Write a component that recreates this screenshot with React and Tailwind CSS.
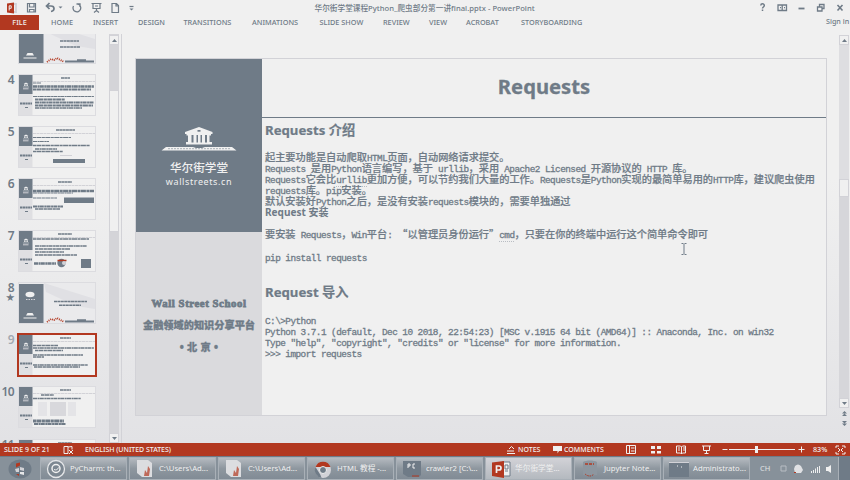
import React from "react";

const SANS = "font-['Noto_Sans','Noto_Sans_CJK_SC',sans-serif]";

/* Splits a line into half-width and full-width runs, so both sit on one grid. */
function Line({ children, wavy }) {
  const runs = children.match(/[\x20-\x7e]+|[^\x20-\x7e]+/g) || [];
  return (
    <div className="h-[11.15px] whitespace-pre leading-[11.15px]">
      {runs.map((run, i) =>
        run.charCodeAt(0) < 127 ? (
          <span key={i} className="font-['Liberation_Mono','Noto_Sans_CJK_SC',monospace] text-[9.4px] tracking-[-0.54px] [-webkit-text-stroke:0.3px_#6f7b87]">
            {run.split(wavy || "\n").map((part, j) => (
              <React.Fragment key={j}>
                {j > 0 && <span className="border-b border-dotted border-[#b9bdc3]">{wavy}</span>}
                {part}
              </React.Fragment>
            ))}
          </span>
        ) : (
          <span key={i} className="font-['Noto_Sans_CJK_SC',sans-serif] text-[10.2px] [-webkit-text-stroke:0.2px_#6f7b87]">{run}</span>
        )
      )}
    </div>
  );
}

function Dome({ x, y, s = 1 }) {
  return (
    <g transform={`translate(${x} ${y}) scale(${s})`} fill="#f0f0f0">
      <path d="M5 0 9 2.5H1zM2 3h1.5v3H2zm2.3 0h1.4v3H4.300zm2.200 0H8v3H6.500zM0 7h10v1H0z" />
    </g>
  );
}

function SlideArt({ title, rows, blocks = [], accents = null }) {
  return (
    <svg viewBox="0 0 78 42" className="block h-[42px] w-[78px]">
      <rect x=".5" y=".5" width="77" height="41" fill="#f0f0f0" stroke="#dcdce0" />
      <rect x="1" y="1" width="13.500" height="19" fill="#6f7b87" />
      <rect x="1" y="20" width="13.500" height="21" fill="#dfdfe2" />
      <Dome x={5} y={8.500} s={0.6} />
      <path d="M5 14.800h5.500" stroke="#d2d2d7" />
      <path d="M2 29.500h12" stroke="#6f7b87" strokeWidth="2.200" strokeDasharray="2.300 .4" />
      <path d="M7 33.500h3" stroke="#6f7b87" />
      <path d="M15 7.500h62" stroke="#d2d2d7" strokeDasharray="3 .5" />
      <path d={`M${title[0]} 4h${title[1]}`} stroke="#6f7b87" strokeWidth="1.700" strokeDasharray="3 .3" />
      {rows.map(([x, y, w, h], i) => (
        <path key={i} d={`M${x} ${y}h${w}`} stroke="#6f7b87" strokeWidth={h} strokeDasharray={i % 2 ? "4 .5 2 .3" : "3 .4 5 .5"} />
      ))}
      {blocks.map(([x, y, w, h, c], i) => (
        <rect key={i} x={x} y={y} width={w} height={h} fill={c} />
      ))}
      {accents}
    </svg>
  );
}

function CoverArt({ late }) {
  return (
    <svg viewBox="0 0 78 42" className="block h-[42px] w-[78px]">
      <rect x=".5" y=".5" width="77" height="41" fill="#eaeaec" stroke="#dcdce0" />
      <path d="M26 1 77 17V27L58 24 28 10z" fill="#e0e0e4" />
      <rect x="1" y="2" width="24.500" height="39" fill="#6f7b87" />
      {late && <ellipse cx="12" cy="12.500" rx="4.500" ry="2.800" fill="#f0f0f0" />}
      {late && <path d="M8 17.500h9" stroke="#d2d2d7" strokeDasharray="1.500 1" />}
      <path d="M9.500 31h5l1.500 2.500H8zM5.500 35.500h13v1H5.500z" fill="#f0f0f0" />
      {late ? (
        <path d="M36 19.500h33M41 23.200h22" stroke="#6f7b87" strokeWidth="1.400" strokeDasharray="3 .4" />
      ) : (
        <path d="M42 19h19M42 25h20" stroke="#6f7b87" strokeWidth="1.700" strokeDasharray="3 .4" />
      )}
      <path d="M29 40l4-3 3 1 3-2 7 4" stroke="#b23820" strokeWidth="1.800" fill="none" strokeDasharray="1 1" />
      <path d="M47 39.500h29M59 38.200h9" stroke="#6f7b87" strokeWidth="2" />
    </svg>
  );
}

const slides = [
  { n: "3", cover: true },
  { n: "4", title: [43, 9], rows: [[15, 9, 8, 1], [15, 12.500, 61, 2.600], [15, 15.500, 58, 2], [15, 22.500, 61, 1.200], [17, 25.500, 30, 2], [17, 28.500, 59, 2], [17, 31.500, 58, 2], [17, 34, 47, 1.600]] },
  { n: "5", title: [38, 19], rows: [[15, 11.500, 38, 1.200], [15, 15.500, 16, 1.200], [15, 19.500, 57, 1.700], [17, 23, 22, 1.500], [15, 25.500, 30, 1.600]], blocks: [[35, 33, 32, 4, "#6f7b87"], [42, 29, 12, 1, "#d2d2d7"]] },
  { n: "6", title: [40, 14], rows: [[15, 13, 61, 2.600], [15, 15, 40, 1.200], [15, 20, 24, 1.200], [15, 28.500, 30, 2.200], [17, 31, 25, 1.500]], blocks: [[46, 19.500, 30, 5.500, "#6f7b87"]] },
  { n: "7", title: [40, 14], rows: [[15, 9, 56, 1.300], [17, 16, 52, 1.400], [17, 19, 35, 1.400], [17, 22, 29, 1.500], [17, 25, 42, 1.300], [16, 33.500, 22, 2.600]], blocks: [[63, 29, 10, 9, "#6f7b87"]], accents: <g><circle cx="43.500" cy="33" r="4.200" fill="#6f7b87" /><path d="M39.500 30.500h9" stroke="#b23820" strokeWidth="1.500" /><circle cx="46" cy="33" r="2" fill="#d2d2d7" /></g> },
  { n: "8", cover: true, late: true },
  { n: "9", title: [42, 11], rows: [[15, 11.500, 25, 1.300], [15, 14, 61, 1.700], [17, 16.500, 28, 1.600], [15, 21, 50, 1.300], [15, 23, 11, 1.300], [15, 31, 55, 1.400], [16, 33, 46, 1.700]] },
  { n: "10", title: [42, 11], rows: [[23, 9, 13, 1.400], [15, 12.500, 48, 1.500], [15, 35, 31, 3], [16, 38, 32, 2]], blocks: [[20, 16, 9, 14, "#e4e4e7"], [32, 16, 16, 14, "#d8d8dc"], [50, 16, 8, 14, "#e4e4e7"]] },
  { n: "11", title: [40, 14], rows: [] },
];

function Thumbnails() {
  return (
    <div className="flex w-[109px] flex-col overflow-hidden">
      <div className="mt-[-12.500px] flex flex-col gap-[10.150px]">
        {slides.map((s) => (
          <div key={s.n} className="flex h-[42px] shrink-0">
            <div className={`w-[18px] shrink-0 pr-[4px] text-right text-[12px] font-semibold leading-[11px] tracking-[-0.6px] ${s.n === "9" ? "text-[#a3aab2]" : "text-[#6f7b87]"}`}>
              {s.n}
              {s.late && <div className="text-[8.500px] leading-[8px]">★</div>}
            </div>
            <div className={s.n === "9" ? "outline-2 -outline-offset-1 outline-[#b23820]" : ""}>
              {s.cover ? <CoverArt late={s.late} /> : <SlideArt {...s} />}
            </div>
          </div>
        ))}
      </div>
    </div>
  );
}

function Arrow({ down }) {
  return (
    <div className="flex h-[10px] w-full shrink-0 items-center justify-center border border-[#d2d2d7] bg-[#f0f0f0]">
      <svg viewBox="0 0 5 3" className="h-[3px] w-[5px]" fill="#6f7b87">
        <path d={down ? "M0 0h5L2.500 3z" : "M0 3h5L2.500 0z"} />
      </svg>
    </div>
  );
}

function DoubleArrow({ down }) {
  return (
    <div className="flex h-[10px] items-center justify-center">
      <svg viewBox="0 0 5 5" className="h-[5px] w-[5px]" fill="#6f7b87">
        <path d={down ? "M0 0h5L2.500 2.500zM0 2.500h5L2.500 5z" : "M0 2.500h5L2.500 0zM0 5h5L2.500 2.500z"} />
      </svg>
    </div>
  );
}

function QuickAccess() {
  return (
    <svg viewBox="0 0 140 14" className="h-[14px] w-[140px]" fill="none" stroke="#6f7b87" strokeWidth="1.200">
      <path d="M11.500 3h4.500v8h-4.500" stroke="#d2d2d7" strokeWidth="1.800" />
      <path d="M7 2.500l7-1v11l-7-1z" fill="#b23820" stroke="none" />
      <path d="M9.200 9.500V4.800h2v2.500h-2" stroke="#f0f0f0" strokeWidth="1" />
      <path d="M27.500 2.500h8v8.500h-8zM29.500 2.500V6h4.500V2.500M29.500 11V8.500h4.500V11" />
      <path d="M46.500 5h4.500c4 0 4 5 0 5.500M49.500 2L46.500 5l3 3" strokeWidth="1.700" />
      <path d="M58.500 5.500h4l-2 2z" fill="#6f7b87" stroke="none" />
      <path d="M78 3.200a3.900 3.900 0 1 1-4.500 1.800M76.500 3h3.500v3" strokeWidth="1.300" />
      <path d="M91.500 2.500h10M93 3v4.500h7V3M96.500 7.500V10M94 11.500l2.500-2 2.500 2M95 5h3" />
      <path d="M112 2.500h4.500l2 2V11.500H112zM116 2.500v2.500h2.500" />
      <path d="M129.500 5.500h4" />
      <path d="M129.500 7.500h4l-2 2z" fill="#6f7b87" stroke="none" />
    </svg>
  );
}

const tabs = [
  ["HOME", "w-[42px]"], ["INSERT", "w-[45px]"], ["DESIGN", "w-[45.500px]"], ["TRANSITIONS", "w-[68.500px]"],
  ["ANIMATIONS", "w-[67.500px]"], ["SLIDE SHOW", "w-[63.500px]"], ["REVIEW", "w-[46px]"], ["VIEW", "w-[37px]"],
  ["ACROBAT", "w-[55px]"], ["STORYBOARDING", "w-[80px]"],
];

function Header() {
  return (
    <header className="h-[34px] shrink-0">
      <div className="flex h-[15px] items-center">
        <QuickAccess />
        <div className="ml-[174.500px] w-[240px] whitespace-nowrap text-[7.650px] font-medium leading-[12px] tracking-[0.020px]">
          华尔街学堂课程Python_爬虫部分第一讲final.pptx - PowerPoint
        </div>
        <svg viewBox="0 0 90 14" className="ml-auto h-[14px] w-[90px]" fill="none" stroke="#6f7b87" strokeWidth="1.300">
          <path d="M0.800 4.500c0-2.200 3.500-2.200 3.500 0 0 1.500-1.800 1.500-1.800 3M2.500 8.500v1.500" strokeWidth="1.500" />
          <path d="M18 4h8.500v5.500H18zM22.200 4v5.500M20 6.700h1M24 6.700h1" />
          <path d="M38.500 7.500h6" strokeWidth="1.800" />
          <path d="M57.500 6h4.500v4h-4.500zM59.500 5.500v-2h4.500v4h-2" />
          <path d="M77.500 4l5 5.500M82.500 4l-5 5.500" strokeWidth="1.600" />
        </svg>
      </div>
      <nav className="flex h-[15px] items-center text-[7.300px] font-medium leading-[15px]">
        <div className="mr-[12px] h-[15px] w-[39px] bg-[#b23820] text-center text-[#f0f0f0]">FILE</div>
        {tabs.map(([t, w]) => (
          <div key={t} className={`${w} shrink-0 whitespace-nowrap`}>{t}</div>
        ))}
        <div className="ml-auto mt-[-3px] w-[24px] whitespace-nowrap text-[7.200px]">Sign in</div>
      </nav>
    </header>
  );
}

function Logo() {
  return (
    <svg viewBox="0 0 76 26" className="h-[26px] w-[76px]" fill="#f0f0f0">
      <path d="M38 1 51.500 6v2H50v1.500h-1.500V16H51v2.500H25V16h2V9.500h-1.500V8H24V6z" />
      <path d="M30.500 9h2v7.500h-2zM35.500 9h1.500v7.500h-1.500zM39.500 9h1.500v7.500h-1.500zM44 9h2v7.500h-2z" fill="#6f7b87" />
      <rect x="36.500" y="4" width="3" height="1.700" fill="#6f7b87" />
      <path d="M5 21h27l3 1h6l3-1h27l4.500 3.500H.5z" />
      <path d="M7 22.700h62" stroke="#a9b0b7" strokeWidth="1" strokeDasharray="2 1" />
    </svg>
  );
}

function Slide() {
  return (
    <main className="ml-[13px] mt-[24px] flex h-[358px] w-[692px] border border-[#d2d2d7] bg-[#f0f0f0]">
      <aside className="flex w-[126px] shrink-0 flex-col">
        <div className="flex h-[173px] flex-col items-center bg-[#6f7b87] pt-[67px] text-[#f0f0f0]">
          <Logo />
          <div className="mt-[8px] text-[11.600px] font-medium leading-[15px]">华尔街学堂</div>
          <div className="mt-[1px] text-[9px] leading-[12px] tracking-[0.600px]">wallstreets.cn</div>
        </div>
        <div className="flex flex-1 flex-col items-center bg-[#dadadd] pt-[61px] font-black">
          <div className="whitespace-nowrap font-['Liberation_Serif',serif] text-[10.800px] leading-[20px] tracking-[0.550px] [-webkit-text-stroke:0.800px_#6f7b87]">Wall Street School</div>
          <div className="mt-[2px] whitespace-nowrap font-['Noto_Sans_CJK_SC',sans-serif] text-[10.200px] leading-[20px] [-webkit-text-stroke:0.300px_#6f7b87]">金融领域的知识分享平台</div>
          <div className="mt-[2px] text-[10.200px] leading-[20px] tracking-[0.300px] [-webkit-text-stroke:0.300px_#6f7b87]">• 北 京 •</div>
        </div>
      </aside>
      <article className="flex flex-1 flex-col">
        <h1 className="h-[59px] border-b border-[#6f7b87] text-center text-[20.200px] font-bold leading-[54px] [-webkit-text-stroke:0.300px_#6f7b87]">Requests</h1>
        <div className="flex flex-col pl-[3px]">
          <h2 className="mt-[1px] h-[22px] text-[13.200px] font-bold leading-[22px] [-webkit-text-stroke:0.200px_#6f7b87]">Requests 介绍</h2>
          <div className="mt-[8.500px] font-medium">
            <Line>起主要功能是自动爬取HTML页面，自动网络请求提交。</Line>
            <Line wavy="urllib">Requests 是用Python语言编写，基于 urllib，采用 Apache2 Licensed 开源协议的 HTTP 库。</Line>
            <Line wavy="urllib">Requests它会比urllib更加方便，可以节约我们大量的工作。Requests是Python实现的最简单易用的HTTP库，建议爬虫使用</Line>
            <Line>requests库。pip安装。</Line>
            <Line>默认安装好Python之后，是没有安装requests模块的，需要单独通过</Line>
            <div className="h-[11.150px] text-[10px] font-bold leading-[14.500px] tracking-[0.020px]">Request 安装</div>
            <Line> </Line>
            <Line wavy="cmd">要安装 Requests，Win平台: “以管理员身份运行”cmd，只要在你的终端中运行这个简单命令即可</Line>
            <Line> </Line>
            <Line>pip install requests</Line>
          </div>
          <h2 className="mt-[20.500px] h-[22px] text-[13.200px] font-bold leading-[23px] [-webkit-text-stroke:0.200px_#6f7b87]">Request 导入</h2>
          <div className="mt-[9.400px] font-medium">
            <Line>{"C:\\>Python"}</Line>
            <Line>Python 3.7.1 (default, Dec 10 2018, 22:54:23) [MSC v.1915 64 bit (AMD64)] :: Anaconda, Inc. on win32</Line>
            <Line>{'Type "help", "copyright", "credits" or "license" for more information.'}</Line>
            <Line>{">>> import requests"}</Line>
          </div>
        </div>
      </article>
    </main>
  );
}

/* Text cursor resting over the slide. */
function Caret() {
  return (
    <svg viewBox="0 0 6 12" className="absolute left-[681px] top-[243px] h-[12px] w-[6px]" fill="none" stroke="#6f7b87">
      <path d="M.5.500h2M3.500.500h2M3 1v10M.5 11.500h2M3.500 11.500h2" />
    </svg>
  );
}

function StatusBar() {
  return (
    <div className="flex h-[13px] shrink-0 items-center bg-[#b23820] text-[7px] font-medium leading-[13px] text-[#f0f0f0]">
      <div className="ml-[4px] w-[59px] whitespace-nowrap">SLIDE 9 OF 21</div>
      <svg viewBox="0 0 12 10" className="mr-[10px] h-[10px] w-[12px]" fill="none" stroke="#f0f0f0">
        <path d="M1 1.500h4v7H1zM5 2l4-.5v3M6 5l4 4M10 5L6 9" />
      </svg>
      <div className="w-[420px] whitespace-nowrap tracking-[-0.040px]">ENGLISH (UNITED STATES)</div>
      <svg viewBox="0 0 10 10" className="ml-[1px] h-[10px] w-[10px]" fill="none" stroke="#f0f0f0">
        <path d="M1 8.500h8M1 6h7M3 4l2.500-2.500L8 4" />
      </svg>
      <div className="ml-[2px] w-[35px]">NOTES</div>
      <svg viewBox="0 0 9 8" className="h-[8px] w-[9px]" fill="#f0f0f0"><path d="M0 0h9v5H6L4.500 7.500V5H0z" /></svg>
      <div className="ml-[2px] w-[60px]">COMMENTS</div>
      <svg viewBox="0 0 182 13" className="ml-[1px] h-[13px] w-[182px]" fill="none" stroke="#f0f0f0">
        <path d="M1.500 2.500h9v8h-9zM4.500 2.500v8M6 5h3.500M6 8h3.500" />
        <path d="M26 3h4v3h-4zM32 3h4v3h-4zM26 8h4v2.500h-4zM32 8h4v2.500h-4z" fill="#f0f0f0" stroke="none" />
        <path d="M51.500 3h4l1 1 1-1h3v7h-3l-1 1-1-1h-4zM56.500 4v7M53 5h2M53 7h2M58 5h2M58 7h2" />
        <path d="M77 3h9M78.500 3v4.500h6V3M81.500 7.500V11M79.500 10.500h4" />
        <path d="M97.500 6.500h5M104 6.500h66M173.500 6.500h6M176.500 3.500v6" />
        <path d="M131.500 3v7" strokeWidth="3" />
      </svg>
      <div className="ml-[6px] w-[22px] text-[7.200px]">83%</div>
      <svg viewBox="0 0 11 10" className="h-[10px] w-[11px]" fill="none" stroke="#f0f0f0">
        <path d="M1 3V1h3M7 1h3v2M10 7v2H7M4 9H1V7M3 3l2 2M8 3L6 5M3 7l2-2M8 7L6 5" />
      </svg>
    </div>
  );
}

const icons = {
  pycharm: <g><circle cx="10" cy="10" r="8.500" fill="#7c8791" stroke="#e6e7e9" strokeWidth="1.300" /><circle cx="10" cy="9.500" r="4" fill="none" stroke="#f0f0f0" strokeWidth="1.500" /><path d="M8 10.500c2 1 4 0 4.500-2" stroke="#f0f0f0" fill="none" /></g>,
  page: <g><path d="M2 1h11l4 3v14H7L2 14z" fill="#dcdde0" /><path d="M9 17l1-6 2 3 1-7 2 3-1 7z" fill="#b23820" opacity=".7" /></g>,
  chrome: <g><circle cx="10" cy="11" r="8" fill="#d2d2d7" /><path d="M2.500 8a8 8 0 0 1 15 0l-6 0z" fill="#b23820" /><path d="M2.500 8l5 8 1 3A8 8 0 0 1 2.500 8z" fill="#6f7b87" /><circle cx="10" cy="11" r="3.500" fill="#6f7b87" stroke="#f0f0f0" /></g>,
  pc: <g><path d="M1 2h18v14l-2 2H6L1 15z" fill="#6f7b87" /><path d="M6 9V5h2v2H6M13 5h-2v4h2" stroke="#f0f0f0" fill="none" /><path d="M10 17h7" stroke="#b23820" /></g>,
  ppt: <g><path d="M11 3h8v14h-8" fill="#f0f0f0" stroke="#6f7b87" /><path d="M14 6h3v4h-3zM14 12h3" stroke="#6f7b87" fill="none" /><path d="M1 3.500 13 2v17L1 17z" fill="#b23820" /><path d="M5.500 14V7h2.500a2 2 0 0 1 0 4H5.500" stroke="#f0f0f0" strokeWidth="1.700" fill="none" /></g>,
  jupyter: <g><path d="M3 3c4-2 10-2 14 0v13H3z" fill="#8d969f" /><path d="M5 5h9" stroke="#b23820" strokeWidth="1.500" strokeDasharray="3 1" /><path d="M5 15q5 4 9 0" stroke="#b23820" fill="none" strokeDasharray="1.500 1" /></g>,
  cmd: <g><path d="M0 3h20v15H0z" fill="#6f7b87" /><path d="M0 3.500h20" stroke="#d2d2d7" /><path d="M8 7h1M12 8h1" stroke="#f0f0f0" /></g>,
};

const tasks = [
  ["pycharm", "PyCharm: th..."], ["page", "C:\\Users\\Ad..."], ["page", "C:\\Users\\Ad..."], ["chrome", "HTML 教程 -..."],
  ["pc", "crawler2 [C:\\..."], ["ppt", "华尔街学堂..."], ["jupyter", "Jupyter Note..."], ["cmd", "Administrato..."],
];

function Taskbar() {
  return (
    <footer className="flex h-[24px] shrink-0 items-center border-t border-[#6f7b87] bg-[#87919a]">
      <div className="flex w-[40px] shrink-0 justify-center">
        <svg viewBox="0 0 24 20" className="h-[20px] w-[24px]">
          <ellipse cx="12" cy="10" rx="11.500" ry="9.500" fill="#6f7b87" />
          <path d="M8 4.500l4-1v3l-4 2z" fill="#b23820" />
          <path d="M12 8l4 1v3l-4-1zM7 10l4-1v4l-3 0z" fill="#d2d2d7" />
          <path d="M12 13h4v3l-4-1z" fill="#e6e7e9" /><path d="M8 15h3v2z" fill="#b23820" />
        </svg>
      </div>
      <div className="flex w-[713px] shrink-0 gap-[2px]">
        {tasks.map(([icon, name], i) => (
          <div
            key={i}
            className={`flex h-[23px] w-[87px] shrink-0 items-center overflow-hidden whitespace-nowrap border border-[#a9b0b7] pl-[5px] text-[7.700px] text-[#f0f0f0] ${
              icon === "ppt" ? "bg-linear-to-b from-[#d2d2d7] to-[#b4b9bf]" : "bg-linear-to-b from-[#b5bac0] via-[#8e979f] to-[#818b95]"
            }`}
          >
            <svg viewBox="0 0 20 20" className="mr-[4px] h-[20px] w-[20px] shrink-0">{icons[icon]}</svg>
            {name}
          </div>
        ))}
      </div>
      <div className="flex h-full flex-1 items-center pl-[7px] text-[7.500px] text-[#e0e1e4]">
        <span className="w-[20px]">CH</span>
        <svg viewBox="0 0 58 14" className="h-[14px] w-[58px] shrink-0" fill="#f0f0f0">
          <path d="M1 4h5v5H1z" fill="none" stroke="#b8bdc3" />
          <path d="M15 4q3-3 6 0l2 4-2 3h-6l-1-4z" fill="#e0e1e4" /><path d="M14 10h2v1h-2z" fill="#b23820" />
          <path d="M31 9h1v2h-1zM33 8h1v3h-1zM35 6.500h1V11h-1zM37 5h1v6h-1zM39 4h1v7h-1z" />
          <path d="M46 5h2l3-2v8l-3-2h-2z" />
        </svg>
      </div>
      <div className="h-full w-[12px] border-l border-[#a9b0b7] bg-[#6f7b87]" />
    </footer>
  );
}

export default function App() {
  return (
    <div className={`relative flex h-[480px] w-[850px] flex-col overflow-hidden bg-[#f0f0f0] text-[#6f7b87] ${SANS}`}>
      <Header />
      <div className="flex min-h-0 flex-1 bg-linear-to-b from-[#f0f0f0] from-35% to-[#e2e2e5]">
        <Thumbnails />
        <div className="flex w-[10px] shrink-0 flex-col bg-[#d4d4d8] pt-[1px]">
          <Arrow />
          <div className="mt-[45px] h-[142px] border border-[#d2d2d7] bg-[#f0f0f0]" />
          <div className="flex-1" />
          <Arrow down />
        </div>
        <div className="ml-[2px] w-px shrink-0 bg-[#d2d2d7]" />
        <Slide />
        <div className="ml-[12px] flex w-[10px] shrink-0 flex-col pt-[1px] pb-[15px]">
          <Arrow />
          <div className="h-[134px] bg-[#dedee1]" />
          <div className="h-[18px] border border-[#d2d2d7] bg-[#f0f0f0]" />
          <div className="flex-1 bg-[#d6d6da]" />
          <Arrow down />
          <DoubleArrow />
          <DoubleArrow down />
        </div>
      </div>
      <StatusBar />
      <Taskbar />
      <Caret />
    </div>
  );
}
